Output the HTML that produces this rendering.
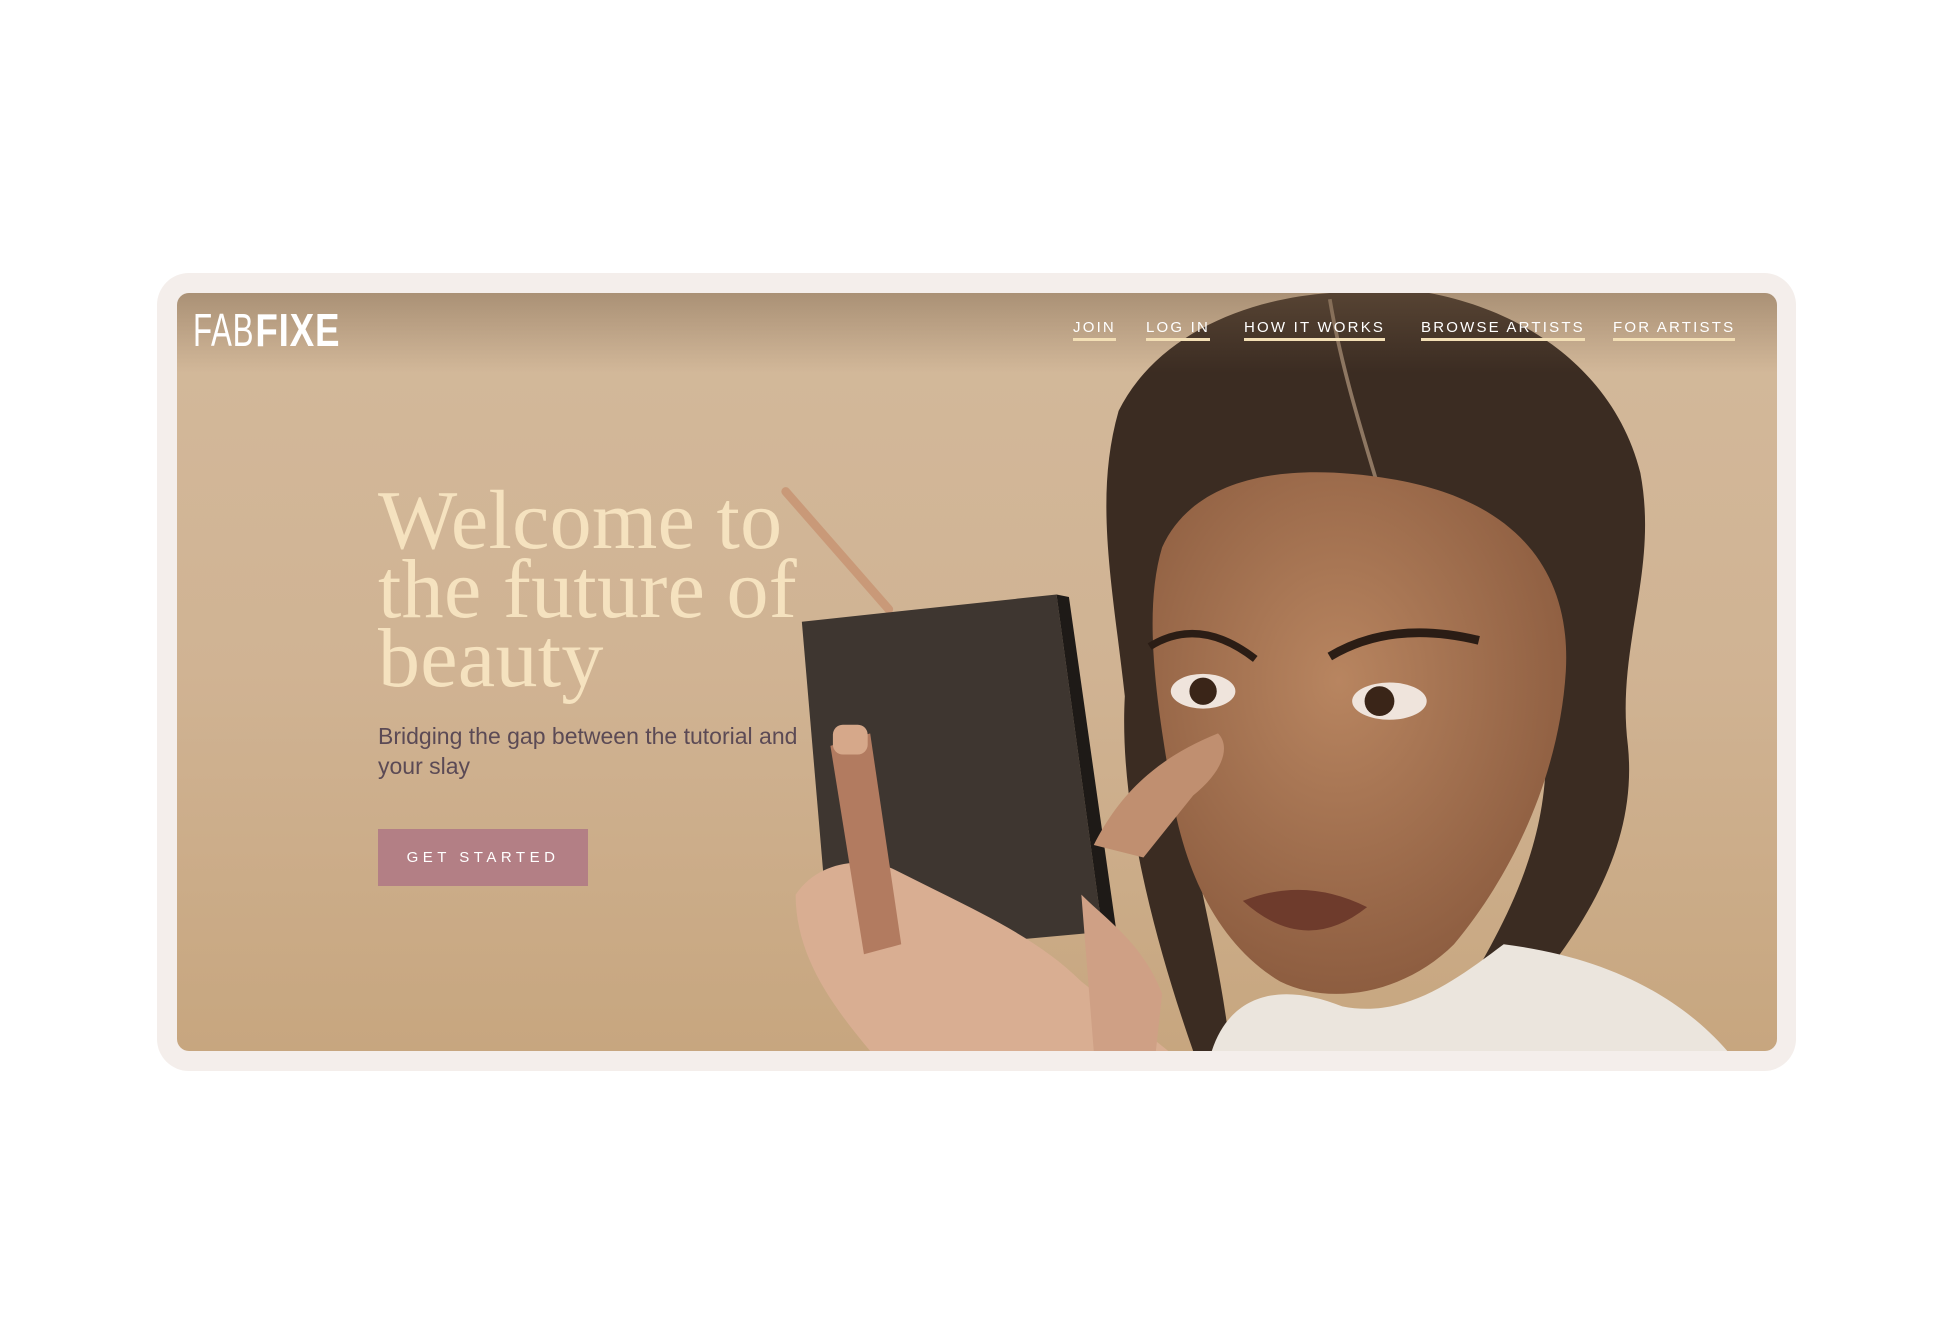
<!DOCTYPE html>
<html><head><meta charset="utf-8"><style>
*{margin:0;padding:0;box-sizing:border-box}
html,body{width:1948px;height:1340px;background:#fff;overflow:hidden;font-family:"Liberation Sans",sans-serif}
.frame{position:absolute;left:157px;top:273px;width:1639px;height:798px;background:#f4eeeb;border-radius:32px}
.hero{position:absolute;left:177px;top:293px;width:1600px;height:758px;border-radius:12px;overflow:hidden;background:linear-gradient(180deg,#d3b99b 0%,#d0b393 50%,#c7a67f 100%)}
.hero svg{position:absolute;left:0;top:0}
.topfade{position:absolute;left:0;top:0;width:100%;height:80px;background:linear-gradient(180deg,rgba(120,96,72,.45),rgba(120,96,72,0))}
.logo{position:absolute;left:16px;top:14px;color:#fff;font-size:46px;line-height:46px;letter-spacing:1px;transform:scaleX(.8);transform-origin:left;white-space:nowrap}
.logo .a{font-weight:300;display:inline-block;transform:scaleX(.85);transform-origin:left;margin-right:-12px}
.nav{position:absolute;top:26px;left:0;width:100%;}
.nav a{position:absolute;color:#fff;text-decoration:none;font-size:15px;letter-spacing:2.2px;border-bottom:3px solid #f3dfb5;padding-bottom:1px;line-height:18px;white-space:nowrap}
h1{position:absolute;left:201px;top:193px;font-family:"Liberation Serif",serif;font-weight:400;font-size:84px;line-height:69px;color:#f5e2bf;letter-spacing:0.3px}
.sub{position:absolute;left:201px;top:428px;width:460px;font-size:23px;line-height:30px;color:#5b4a55}
.btn{position:absolute;left:201px;top:536px;width:210px;height:57px;background:#b37f85;color:#fff;font-size:15px;letter-spacing:4.5px;text-align:center;line-height:57px}
</style></head><body>
<div class="frame"></div>
<div class="hero">
<svg width="1600" height="758" viewBox="142 235 1288 611" preserveAspectRatio="none">
<defs>
<radialGradient id="sk" cx="0.45" cy="0.4" r="0.6"><stop offset="0" stop-color="#b88560"/><stop offset="1" stop-color="#8d5d40"/></radialGradient>
</defs>
<path d="M900 330 C930 270 1000 240 1070 235 L1150 235 C1230 250 1300 300 1320 380 C1335 460 1300 520 1310 600 C1320 700 1250 780 1190 846 L1150 846 C1200 760 1260 680 1240 560 C1220 470 1210 420 1170 400 L960 420 C930 470 940 540 950 620 C960 700 980 760 990 846 L960 846 C930 760 900 650 905 560 C895 470 880 400 900 330Z" fill="#3b2c22"/>
<path d="M1070 240 C1080 300 1100 360 1110 395" stroke="#8e7762" stroke-width="3" fill="none"/>
<path d="M935 440 C960 385 1030 370 1120 385 C1210 400 1265 450 1260 540 C1255 620 1220 700 1170 760 C1130 800 1070 810 1030 790 C980 760 950 700 940 620 C930 560 920 490 935 440Z" fill="url(#sk)"/>
<path d="M975 846 C990 800 1030 790 1080 810 C1130 820 1170 790 1210 760 C1290 770 1350 800 1390 846Z" fill="#ebe5dd"/>
<ellipse cx="968" cy="556" rx="26" ry="14" fill="#efe4dc"/><circle cx="968" cy="556" r="11" fill="#3a2518"/>
<ellipse cx="1118" cy="564" rx="30" ry="15" fill="#efe4dc"/><circle cx="1110" cy="564" r="12" fill="#3a2518"/>
<path d="M925 520 Q965 495 1010 530" stroke="#2b1d15" stroke-width="6" fill="none"/>
<path d="M1070 528 Q1120 498 1190 515" stroke="#2b1d15" stroke-width="7" fill="none"/>
<path d="M1000 725 Q1050 705 1100 730 Q1050 770 1000 725Z" fill="#6e3b2c"/>
<path d="M632 395 L715 490" stroke="#c99978" stroke-width="7" stroke-linecap="round"/>
<path d="M645 500 L850 478 L887 750 L668 770Z" fill="#3e3630"/>
<path d="M850 478 L860 480 L898 748 L887 750Z" fill="#1e1a17"/>
<path d="M640 720 C660 690 700 690 720 700 L760 720 C800 740 840 760 870 790 L940 846 L700 846 C670 810 640 770 640 720Z" fill="#d9ae92"/>
<path d="M880 680 C900 640 930 610 980 590 C990 600 985 620 960 640 L920 690Z" fill="#c08f70"/>
<path d="M870 720 C890 740 920 760 935 800 L930 846 L880 846Z" fill="#cfa085"/>
<path d="M668 600 L700 590 L725 760 L695 768Z" fill="#b27b60"/>
<rect x="670" y="583" width="28" height="24" rx="8" fill="#d6a88a"/>
</svg>
<div class="topfade"></div>
<div class="logo"><span class="a">FAB</span><b style="letter-spacing:1px">FIXE</b></div>
<div class="nav">
<a style="left:896px">JOIN</a>
<a style="left:969px">LOG IN</a>
<a style="left:1067px">HOW IT WORKS</a>
<a style="left:1244px">BROWSE ARTISTS</a>
<a style="left:1436px">FOR ARTISTS</a>
</div>
<h1>Welcome to<br>the future of<br>beauty</h1>
<div class="sub">Bridging the gap between the tutorial and your slay</div>
<div class="btn">GET STARTED</div>
</div>
</body></html>
